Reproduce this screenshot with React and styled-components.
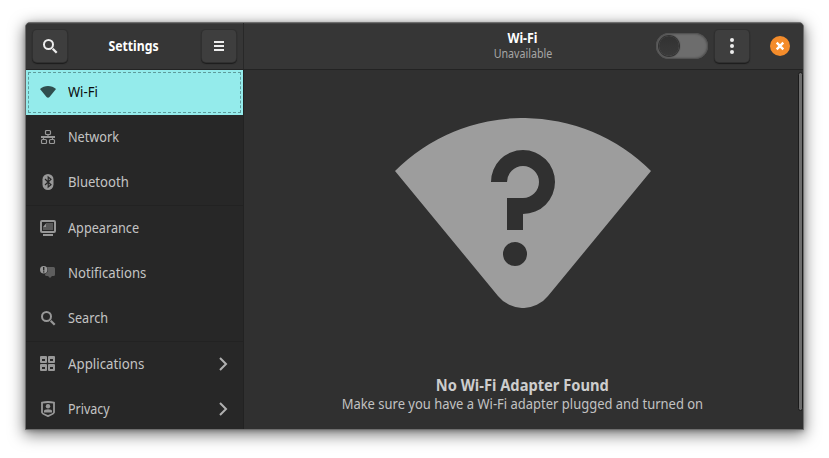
import React from "react";
import styled, { createGlobalStyle } from "styled-components";

const Global = createGlobalStyle`
  * { box-sizing: border-box; }
  html, body { margin: 0; background: #fff; overflow: hidden; }
  body { font-family: "Noto Sans", "Open Sans", sans-serif; font-size: 14.4px; color: #c9c9c9; }
  svg { display: block; flex: none; }
`;

const Desktop = styled.div`
  width: 829px;
  height: 458px;
  padding: 22px 25px 28px;
  background: #fff;
  overflow: hidden;
`;

const Window = styled.main`
  width: 779px;
  height: 408px;
  display: flex;
  flex-direction: column;
  border: 1px solid #6e6e6e;
  border-radius: 5px 5px 0 0;
  background: #303030;
  overflow: hidden;
  box-shadow: 0 4px 15px 1px rgba(0, 0, 0, 0.5), 0 1px 4px rgba(0, 0, 0, 0.25);
`;

const Header = styled.header`
  height: 47px;
  flex: none;
  display: flex;
  background: #363636;
  border-bottom: 1px solid #232323;
  box-shadow: inset 0 1px #444;
`;

const HeaderLeft = styled.div`
  width: 218px;
  padding: 0 7px;
  display: flex;
  align-items: center;
  justify-content: space-between;
  border-right: 1px solid #282828;
`;

const HeaderRight = styled.div`
  flex: 1;
  display: grid;
  grid-template-columns: 1fr auto 1fr;
  align-items: center;
  padding-right: 13px;
  padding-left: 11px;
`;

const HeaderActions = styled.div`
  display: flex;
  align-items: center;
  justify-content: flex-end;
`;

const WindowTitle = styled.div`
  display: flex;
  padding: 0 2px 2px 0;
`;

const TitleStack = styled.div`
  display: flex;
  flex-direction: column;
  align-items: center;
  width: 60px;
  padding-bottom: 1px;
`;

const Button = styled.button`
  width: 34px;
  height: 32px;
  padding: 0;
  display: grid;
  place-items: center;
  color: #ededed;
  background: #3e3e3e;
  border: 0;
  border-radius: 4px;
  box-shadow: 0 0 0 1px #303030, 0 1px 1px 1px #1c1c1c;
`;

const Toggle = styled.div`
  width: 52px;
  height: 26px;
  margin-right: 7px;
  padding: 3px;
  border-radius: 13px;
  background: #6d6d6d;
  box-shadow: inset 0 0 2px 1px #4a4a4a;
`;

const Knob = styled.div`
  width: 20px;
  height: 20px;
  border-radius: 50%;
  background: linear-gradient(#323232, #3a3a3a);
  box-shadow: 0 0 1px 1px #2b2b2b;
`;

const Close = styled.button`
  width: 20px;
  height: 20px;
  margin-left: 21px;
  padding: 0;
  display: grid;
  place-items: center;
  border: 0;
  border-radius: 50%;
  color: #fff;
  background: #f48c2b;
`;

const Body = styled.div`
  flex: 1;
  min-height: 0;
  display: flex;
`;

const Sidebar = styled.nav`
  width: 218px;
  flex: none;
  background: #272727;
  border-right: 1px solid #222;
  overflow: hidden;
`;

const Group = styled.div`
  & + & { border-top: 1px solid #222; }
`;

const Item = styled.div`
  height: 45px;
  padding: 0 12px 1px 14px;
  display: flex;
  align-items: center;
  gap: 12px;
  color: ${(p) => (p.$active ? "#0a0a0a" : "#c4c4c4")};
  background: ${(p) => (p.$active ? "#94ebeb" : "transparent")};
  outline: ${(p) => (p.$active ? "1px dashed #5f9b9b" : "none")};
  outline-offset: -3px;
`;

const IconSlot = styled.span`
  width: 16px;
  height: 16px;
  color: ${(p) => (p.$active ? "#2f4d4d" : "#989898")};
`;

const Label = styled.span`
  flex: 1;
  line-height: 20px;
  white-space: nowrap;
  transform: scaleX(${(p) => p.$fit});
  transform-origin: left;
`;

const Text = styled.span`
  white-space: nowrap;
  font-size: ${(p) => p.$size || 14.4}px;
  font-weight: ${(p) => (p.$bold ? 700 : 400)};
  line-height: ${(p) => p.$line || 19}px;
  color: ${(p) => p.$color || "#fff"};
  transform: scaleX(${(p) => p.$fit});
`;

const Content = styled.section`
  flex: 1;
  min-width: 0;
  display: flex;
`;

const EmptyState = styled.div`
  flex: 1;
  display: flex;
  flex-direction: column;
  align-items: center;
  padding: 48px 0 0 4px;
`;

const Message = styled.div`
  margin-top: 67px;
  padding-right: 1px;
  display: flex;
  flex-direction: column;
  align-items: center;
`;

const Track = styled.div`
  width: 5px;
  flex: none;
  padding: 2px 0 0;
`;

const Thumb = styled.div`
  height: 339px;
  border: 1px solid #1b1b1b;
  border-radius: 3px;
  background: #6c6c6c;
`;

const Svg = (props) => <svg width="16" height="16" viewBox="0 0 16 16" fill="currentColor" {...props} />;

const icons = {
  wifi: <Svg><path d="M0 5C2.200 3 5 2 8 2s5.800 1 8 3L9.500 13a2.100 2.100 0 0 1-3 0z" /></Svg>,
  network: (
    <Svg fill="none" stroke="currentColor" strokeWidth="1.200">
      <rect x="5.500" y="1.500" width="5" height="4" rx="1" />
      <path d="M8 5.500v2M3.500 8v2M12.500 8v2" />
      <path d="M1 8h14" strokeWidth="2" />
      <rect x="1.500" y="10.500" width="5" height="4" rx="1" />
      <rect x="9.500" y="10.500" width="5" height="4" rx="1" />
    </Svg>
  ),
  bluetooth: (
    <Svg>
      <rect x="2.500" width="11" height="16" rx="5.500" />
      <path d="M5 5l6 5.700L8.200 13V3L11 5.300 5 11" fill="none" stroke="#272727" strokeWidth="1.200" />
    </Svg>
  ),
  appearance: (
    <Svg>
      <rect x="1" y="1" width="14" height="11" rx="1" fill="none" stroke="currentColor" strokeWidth="2" />
      <path d="M3 14h10v2H3z" />
      <path d="M6 3h7v7H3V7h3z" opacity=".45" />
      <path d="M6 3.500V7H3z" />
    </Svg>
  ),
  notifications: (
    <Svg>
      <path d="M7 2h6.500A1.500 1.500 0 0 1 15 3.500v6a1.500 1.500 0 0 1-1.500 1.500H12l-2 2-2-2H6.500A1.500 1.500 0 0 1 5 9.500z" fill="#5e5e5e" />
      <circle cx="3.700" cy="4.700" r="4.300" fill="#272727" />
      <circle cx="3.700" cy="4.700" r="3.700" />
      <path d="M3 2h1.400v3.500H3zM3 6.200h1.400v1.300H3z" fill="#272727" />
    </Svg>
  ),
  search: (
    <Svg fill="none" stroke="currentColor" strokeWidth="2">
      <circle cx="6.500" cy="6.500" r="4.500" />
      <path d="M10.700 10.700l4 4" strokeWidth="2.300" />
    </Svg>
  ),
  applications: (
    <Svg>
      <path
        fillRule="evenodd"
        d="M1 0h5q1 0 1 1v5q0 1-1 1H1Q0 7 0 6V1q0-1 1-1zM2 3v2h3V3zM9 0h5q1 0 1 1v5q0 1-1 1H9Q8 7 8 6V1q0-1 1-1zM10 3v2h3V3zM1 8h5q1 0 1 1v5q0 1-1 1H1q-1 0-1-1V9q0-1 1-1zM2 11v2h3v-2zM9 8h5q1 0 1 1v5q0 1-1 1H9q-1 0-1-1V9q0-1 1-1zM10 11v2h3v-2z"
      />
    </Svg>
  ),
  privacy: (
    <Svg>
      <path d="M2 1.700Q8 .3 14 1.700V11.500q0 1-6 3.600-6-2.600-6-3.600z" fill="none" stroke="currentColor" strokeWidth="1.800" />
      <circle cx="8" cy="5.200" r="2.200" />
      <path d="M4 11.500V10q0-1.800 4-1.800t4 1.800v1.500z" />
    </Svg>
  ),
};

const Chevron = () => (
  <Svg fill="none" stroke="#b0b0b0" strokeWidth="2">
    <path d="M5 2l6 6-6 6" />
  </Svg>
);

const WifiUnknown = () => (
  <svg width="256" height="190" viewBox="0 0 256 190">
    <path
      fill="#9d9d9d"
      fillRule="evenodd"
      d="M0 53A181 181 0 0 1 256 53L153 178A32 32 0 0 1 103 178ZM96 64H112A16 16 0 1 1 128 80H112V112H128V96A32 32 0 1 0 96 64ZM132 136A12 12 0 1 0 108 136A12 12 0 1 0 132 136Z"
    />
  </svg>
);

const groups = [
  [
    { icon: "wifi", label: "Wi-Fi", fit: 0.905, active: true },
    { icon: "network", label: "Network", fit: 0.88 },
    { icon: "bluetooth", label: "Bluetooth", fit: 0.91 },
  ],
  [
    { icon: "appearance", label: "Appearance", fit: 0.88 },
    { icon: "notifications", label: "Notifications", fit: 0.915 },
    { icon: "search", label: "Search", fit: 0.88 },
  ],
  [
    { icon: "applications", label: "Applications", fit: 0.922, more: true },
    { icon: "privacy", label: "Privacy", fit: 0.87, more: true },
  ],
];

export default function App() {
  return (
    <>
      <Global />
      <Desktop>
        <Window>
          <Header>
            <HeaderLeft>
              <Button aria-label="Search">{icons.search}</Button>
              <WindowTitle>
                <Text $bold $fit={0.85}>Settings</Text>
              </WindowTitle>
              <Button aria-label="Menu">
                <Svg><path d="M3 3h10v2H3zM3 7h10v2H3zM3 11h10v2H3z" /></Svg>
              </Button>
            </HeaderLeft>
            <HeaderRight>
              <span />
              <TitleStack>
                <Text $bold $fit={0.86} $line={16}>Wi-Fi</Text>
                <Text $size={12} $fit={0.89} $line={15} $color="#a6a6a6">Unavailable</Text>
              </TitleStack>
              <HeaderActions>
                <Toggle><Knob /></Toggle>
                <Button aria-label="More">
                  <Svg><circle cx="8" cy="2" r="2" /><circle cx="8" cy="8" r="2" /><circle cx="8" cy="14" r="2" /></Svg>
                </Button>
                <Close aria-label="Close">
                  <Svg><path d="M4.700 4.700l6.600 6.600M11.300 4.700l-6.600 6.600" stroke="currentColor" strokeWidth="2.400" /></Svg>
                </Close>
              </HeaderActions>
            </HeaderRight>
          </Header>
          <Body>
            <Sidebar>
              {groups.map((group, index) => (
                <Group key={index}>
                  {group.map((item) => (
                    <Item key={item.label} $active={item.active}>
                      <IconSlot $active={item.active}>{icons[item.icon]}</IconSlot>
                      <Label $fit={item.fit}>{item.label}</Label>
                      {item.more && <Chevron />}
                    </Item>
                  ))}
                </Group>
              ))}
            </Sidebar>
            <Content>
              <EmptyState>
                <WifiUnknown />
                <Message>
                  <Text $bold $size={16.5} $fit={0.89} $color="#cdcdcd">No Wi-Fi Adapter Found</Text>
                  <Text $fit={0.902} $color="#c2c2c2">Make sure you have a Wi-Fi adapter plugged and turned on</Text>
                </Message>
              </EmptyState>
              <Track><Thumb /></Track>
            </Content>
          </Body>
        </Window>
      </Desktop>
    </>
  );
}
